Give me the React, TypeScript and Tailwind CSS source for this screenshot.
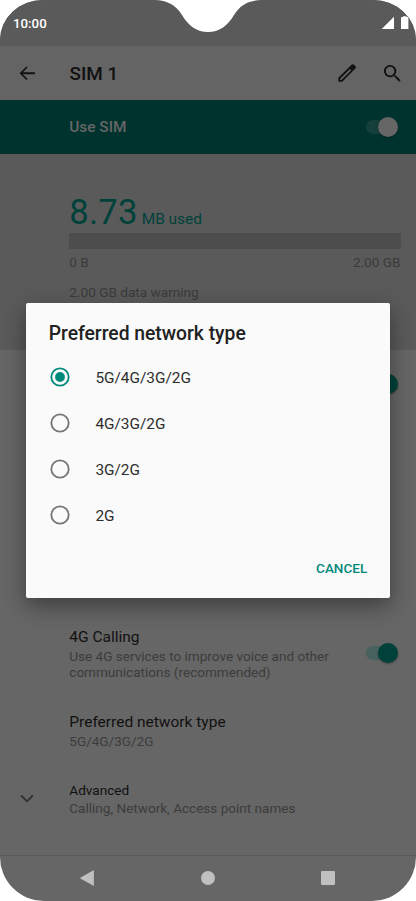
import { ReactNode } from "react";
import cn from "clsx";

const networkTypes = ["5G/4G/3G/2G", "4G/3G/2G", "3G/2G", "2G"];

function Toggle({ light }: { light?: boolean }) {
  return (
    <span className="relative block h-5 w-8 shrink-0">
      <span
        className={cn(
          "absolute left-0 top-[3px] h-3.5 w-7 rounded-full",
          light ? "bg-[#143f3a]" : "bg-[#47615e]"
        )}
      />
      <span
        className={cn(
          "absolute left-3 top-0 size-[19.5px] rounded-full shadow-[0_1px_2px_rgba(0,0,0,0.35)]",
          light ? "bg-[#666666]" : "bg-[#00423a]"
        )}
      />
    </span>
  );
}

function Radio({ checked }: { checked: boolean }) {
  return (
    <svg
      className={checked ? "text-[#00897b]" : "text-[#757575]"}
      width="20"
      height="20"
      viewBox="0 0 20 20"
    >
      <circle
        cx="10"
        cy="10"
        r="8.7"
        fill="none"
        stroke="currentColor"
        strokeWidth="1.8"
      />
      {checked && <circle cx="10" cy="10" r="4.9" fill="currentColor" />}
    </svg>
  );
}

function StatusBar() {
  return (
    <div className="flex h-[46px] shrink-0 justify-between bg-[#5a5a5a] pl-[13px] pr-[7px] pt-[15px]">
      <span className="text-[13.3px] leading-[17px] font-medium text-white">
        10:00
      </span>
      <svg width="28" height="14" viewBox="0 0 28 14" fill="#fff">
        <path d="M13 1.7V14H.7z" />
        <path d="M20 2.9q0-.9.9-.9h1V1.2h3.6V2h1q.9 0 .9.9V14H20z" />
      </svg>
    </div>
  );
}

function AppBar() {
  return (
    <header className="flex h-[54px] shrink-0 items-center bg-[#646464] pl-[17px] pr-[12px] text-[#111111]">
      <svg width="20.5" height="20.5" viewBox="0 0 24 24" fill="currentColor">
        <path d="M21 10.9H6.8l5.6-5.5L11 4l-8 8 8 8 1.4-1.4-5.6-5.5H21z" />
      </svg>
      <h1 className="ml-8 flex-1 pt-px text-[18.9px] leading-6 font-medium">
        SIM 1
      </h1>
      <svg
        width="22"
        height="22"
        viewBox="0 0 24 24"
        fill="currentColor"
        fillRule="evenodd"
      >
        <path d="M2.6 17.3 15 4.9l1.9-1.9c.9-.8 2-.8 2.8 0l1.4 1.4c.8.8.8 1.9 0 2.8L6.8 21.5H2.6zm2 1v1.3h1.4L16.6 9l-1.4-1.4z" />
      </svg>
      <svg
        className="ml-[23px]"
        width="23"
        height="23"
        viewBox="0 0 24 24"
        fill="currentColor"
      >
        <path d="M15.5 14h-.79l-.28-.27A6.47 6.47 0 0 0 16 9.5 6.5 6.5 0 1 0 9.5 16c1.61 0 3.09-.59 4.23-1.57l.27.28v.79l5 4.99L20.49 19zm-6 0a4.5 4.5 0 1 1 0-9 4.5 4.5 0 0 1 0 9z" />
      </svg>
    </header>
  );
}

function DataUsage() {
  return (
    <section className="h-[196px] shrink-0 bg-[#5a5a5a] pl-[69.3px] pr-[15.5px] pt-[37px] text-[13.6px] leading-4 text-[#3a3a3a]">
      <div className="flex h-[42px] items-baseline gap-[4px] text-[#00423a]">
        <span className="text-[34.7px] leading-[43px] tracking-[0.2px]">
          8.73
        </span>
        <span className="text-[15.4px]">MB used</span>
      </div>
      <div className="h-4 rounded-[1px] bg-[#4d4d4d]" />
      <div className="mt-[5px] flex justify-between">
        <span>0 B</span>
        <span>2.00 GB</span>
      </div>
      <p className="mt-[14px]">2.00 GB data warning</p>
    </section>
  );
}

type PreferenceProps = {
  title: string;
  summary: ReactNode;
  small?: boolean;
};

function Preference({ title, summary, small }: PreferenceProps) {
  return (
    <div className="flex-1">
      <h2
        className={cn(
          "text-[#111111]",
          small ? "text-[13.6px] leading-5" : "text-[15.5px] leading-[20.5px]"
        )}
      >
        {title}
      </h2>
      <p className="text-[13.55px] leading-4 text-[#3c3c3c]">{summary}</p>
    </div>
  );
}

function NavigationBar() {
  return (
    <nav className="flex h-[46px] shrink-0 items-center justify-between border-t border-[#5a5a5a] px-[79px] pb-px text-[#c0c0c0]">
      <svg width="16" height="16" viewBox="0 0 16 16" fill="currentColor">
        <path d="M14.9.3V15.7q0 .3-.4.1L1.3 8.4q-.4-.3 0-.6L14.5.2q.4-.2.4.1z" />
      </svg>
      <span className="size-[14px] rounded-full bg-current" />
      <span className="mr-[2px] size-[14.5px] rounded-[1px] bg-current" />
    </nav>
  );
}

function NetworkDialog() {
  return (
    <div
      role="dialog"
      className="absolute left-[25.7px] top-[302.5px] flex h-[295.5px] w-[364.5px] flex-col rounded-[2px] bg-[#fafafa] px-[23px] pt-[19px] shadow-[0_8px_22px_rgba(0,0,0,0.4)]"
    >
      <h2 className="text-[19.3px] leading-6 font-medium text-[#212121]">
        Preferred network type
      </h2>
      <ul className="mt-[9px]">
        {networkTypes.map((type, i) => (
          <li key={type} className="flex h-[46.2px] items-center pl-[1.7px]">
            <span className="-translate-y-px">
              <Radio checked={i === 0} />
            </span>
            <span className="ml-[25px] pt-px text-[15.4px] text-[#2d2d2d]">
              {type}
            </span>
          </li>
        ))}
      </ul>
      <button className="mt-[19px] self-end text-[13.5px] leading-5 font-medium text-[#00897b]">
        CANCEL
      </button>
    </div>
  );
}

export default function App() {
  return (
    <div className="h-[901px] w-[416px] bg-white font-['Roboto',sans-serif]">
      <div className="relative flex h-full flex-col overflow-hidden rounded-t-[43px_40px] rounded-b-[44px] bg-[#666666]">
        <StatusBar />
        <AppBar />
        <div className="flex h-[54px] shrink-0 items-center justify-between bg-[#00332e] pl-[69.3px] pr-[18px]">
          <span className="pt-0.5 text-[15.4px] font-medium text-[#666666]">
            Use SIM
          </span>
          <Toggle light />
        </div>
        <DataUsage />
        <main className="flex flex-1 flex-col">
          <div className="flex h-[270px] shrink-0 justify-end pr-[18px] pt-6">
            <Toggle />
          </div>
          <div className="flex h-[86px] pl-[69.3px] pr-[18px] pt-[7px]">
            <Preference
              title="4G Calling"
              summary={
                <>
                  Use 4G services to improve voice and other
                  <br />
                  communications (recommended)
                </>
              }
            />
            <div className="pt-[16px]">
              <Toggle />
            </div>
          </div>
          <div className="flex h-[68px] pl-[69.3px] pt-[6px]">
            <Preference title="Preferred network type" summary="5G/4G/3G/2G" />
          </div>
          <div className="flex flex-1 pl-5 pt-[6px]">
            <svg
              className="mr-[35.3px] mt-[11px]"
              width="14"
              height="14"
              viewBox="0 0 14 14"
              fill="none"
              stroke="#303030"
              strokeWidth="1.8"
            >
              <path d="m1.2 4.5 5.8 5.8 5.8-5.8" />
            </svg>
            <Preference
              small
              title="Advanced"
              summary="Calling, Network, Access point names"
            />
          </div>
        </main>
        <NavigationBar />

        {/* display notch */}
        <svg
          className="absolute left-[150px] top-0"
          width="116"
          height="33"
          viewBox="0 0 116 33"
          fill="#fff"
        >
          <path d="M5 0C17 .5 25.5 4.5 32 15C38.5 26 47 32 58 32S77.5 26 84 15C90.5 4.5 99 .5 111 0z" />
        </svg>
        <NetworkDialog />
      </div>
    </div>
  );
}
